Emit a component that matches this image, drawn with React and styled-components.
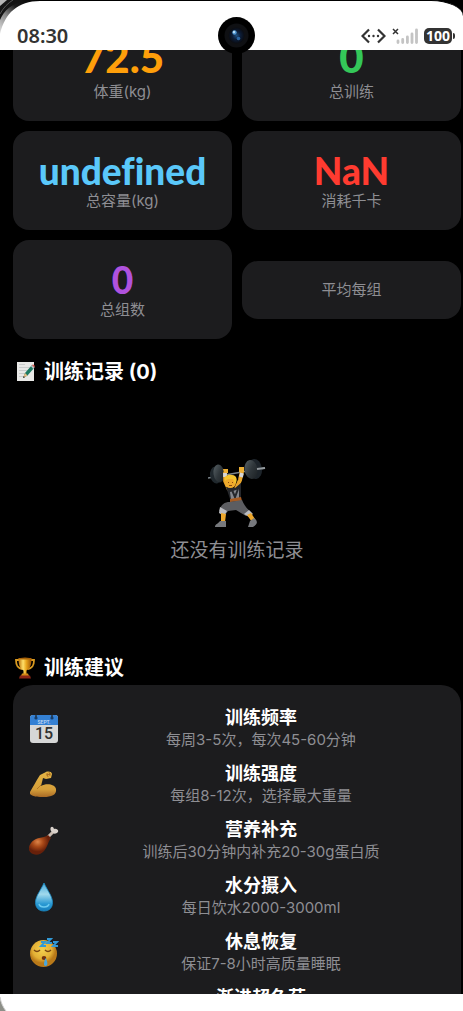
import React from 'react'
import styled, { createGlobalStyle } from 'styled-components'

const stats = [
  { value: '72.5', label: '体重(kg)', color: '#ff9f0a', large: true },
  { value: '0', label: '总训练', color: '#34c759', large: true },
  { value: 'undefined', label: '总容量(kg)', color: '#5ac8fa' },
  { value: 'NaN', label: '消耗千卡', color: '#ff3b30' },
  { value: '0', label: '总组数', color: '#af52de' },
  { label: '平均每组' },
]

const tips = [
  { icon: CalendarIcon, title: '训练频率', text: '每周3-5次，每次45-60分钟' },
  { icon: MuscleIcon, title: '训练强度', text: '每组8-12次，选择最大重量' },
  { icon: DrumstickIcon, title: '营养补充', text: '训练后30分钟内补充20-30g蛋白质' },
  { icon: DropIcon, title: '水分摄入', text: '每日饮水2000-3000ml' },
  { icon: SleepIcon, title: '休息恢复', text: '保证7-8小时高质量睡眠' },
  { icon: ChartIcon, title: '渐进超负荷', text: '' },
]

function App() {
  return (
    <>
      <GlobalStyle />
      <Phone>
        <StatusBar>
          <CornerShade />
          <Time>08:30</Time>
          <StatusIcons>
            <LinkIcon />
            <SignalIcon />
            <Battery>100</Battery>
          </StatusIcons>
          <Camera>
            <CameraLens />
          </Camera>
        </StatusBar>
        <Screen>
          <Content>
            <StatGrid>
              {stats.map((stat) => (
                <StatCard key={stat.label}>
                  {stat.value && (
                    <StatValue $color={stat.color} $large={stat.large}>
                      {stat.value}
                    </StatValue>
                  )}
                  <StatLabel>{stat.label}</StatLabel>
                </StatCard>
              ))}
            </StatGrid>
            <SectionTitle>
              <MemoIcon />
              训练记录 (0)
            </SectionTitle>
            <EmptyState>
              <LifterIcon />
              <EmptyText>还没有训练记录</EmptyText>
            </EmptyState>
            <SectionTitle>
              <TrophyIcon />
              训练建议
            </SectionTitle>
            <TipList>
              {tips.map(({ icon: Icon, title, text }) => (
                <TipRow key={title}>
                  <Icon />
                  <TipBody>
                    <TipTitle>{title}</TipTitle>
                    <TipText>{text}</TipText>
                  </TipBody>
                </TipRow>
              ))}
            </TipList>
          </Content>
        </Screen>
        <BottomBar>
          <BottomCorner />
        </BottomBar>
      </Phone>
    </>
  )
}

export default App

function CornerShade() {
  return (
    <CornerSvg width="40" height="40" viewBox="0 0 40 40" aria-hidden="true">
      <defs>
        <linearGradient id="rim" x1="0" y1="1" x2="1" y2="0">
          <stop offset="0" stopColor="#e4e4e4" />
          <stop offset=".35" stopColor="#8a8a8a" />
          <stop offset=".6" stopColor="#1c1c1c" />
          <stop offset="1" stopColor="#000" />
        </linearGradient>
      </defs>
      <path d="M0 0H40V1C18 1 5 13 0 34Z" fill="url(#rim)" />
      <path d="M0 20C4 10 12 4 24 0H0Z" fill="#141414" />
      <path d="M0 14C3 8 8 3 13 0" fill="none" stroke="#555" />
      <path d="M0 6L7 0H0Z" fill="#b5b5b5" />
    </CornerSvg>
  )
}

function BottomCorner() {
  return (
    <svg width="10" height="17" viewBox="0 0 10 17" aria-hidden="true">
      <path d="M0 3C1 9 3 13 6 17H0Z" fill="#8d8f88" />
      <path d="M0 3C1 9 3 13 6 17" fill="none" stroke="#cfcfcf" />
    </svg>
  )
}

function LinkIcon() {
  return (
    <svg width="25" height="16" viewBox="0 0 25 16" aria-hidden="true">
      <path d="M8 1.5L1.5 8L8 14.5M17 1.5L23.500 8L17 14.500" fill="none" stroke="#333" strokeWidth="2.200" />
      <circle cx="8" cy="8" r="1.200" fill="#333" />
      <circle cx="12.500" cy="8" r="1.200" fill="#333" />
      <circle cx="17" cy="8" r="1.200" fill="#333" />
    </svg>
  )
}

function SignalIcon() {
  return (
    <svg width="26" height="16" viewBox="0 0 26 16" aria-hidden="true">
      <path d="M1 1L6 6M6 1L1 6" stroke="#333" strokeWidth="1.500" />
      <path d="M6 13V14.500M10.700 11.500V14.500M15.400 9V14.500M20 6V14.500M24.500 2V14.500" stroke="#c4c4c4" strokeWidth="2.800" strokeLinecap="round" />
    </svg>
  )
}

function CameraLens() {
  return (
    <svg width="37" height="37" viewBox="0 0 37 37" aria-hidden="true">
      <defs>
        <radialGradient id="lens">
          <stop offset="0" stopColor="#1f4f80" />
          <stop offset=".5" stopColor="#0c1d38" />
          <stop offset="1" stopColor="#0a0c12" />
        </radialGradient>
      </defs>
      <circle cx="18.500" cy="18.500" r="18.500" fill="#000" />
      <circle cx="18.500" cy="18.500" r="12" fill="#0f1013" />
      <circle cx="18.500" cy="18.500" r="8" fill="url(#lens)" />
      <circle cx="16.500" cy="15.500" r="2.200" fill="#4f94cf" />
      <circle cx="16" cy="15" r="1.200" fill="#b5dcf7" />
      <circle cx="20.500" cy="21.500" r="1.800" fill="#2b66a3" />
    </svg>
  )
}

function MemoIcon() {
  return (
    <svg width="22" height="22" viewBox="0 0 22 22" aria-hidden="true">
      <path d="M4 1H21V20H4Z" fill="#e9e9e7" />
      <path d="M6 3.500H12M6 6.500H17M6 9.500H15M6 12.500H12M6 15.500H11" stroke="#c3c5c6" strokeWidth=".8" />
      <path d="M10 17L12 12L19 4L21.500 6.500L14.500 14.500Z" fill="#1d7a62" />
      <path d="M10 17L12 12L14.500 14.500Z" fill="#e8bc82" />
      <path d="M10 17L10.800 15L12 16.200Z" fill="#222" />
      <path d="M17.800 5.300L19 4L21.500 6.500L20.300 7.900Z" fill="#b8bcc0" />
      <path d="M19 4C20 2.500 22.500 4.500 21.500 6.500Z" fill="#e1574f" />
    </svg>
  )
}

function TrophyIcon() {
  return (
    <svg width="22" height="22" viewBox="0 0 22 22" aria-hidden="true">
      <defs>
        <linearGradient id="gold">
          <stop offset="0" stopColor="#b86e08" />
          <stop offset=".35" stopColor="#ffe06a" />
          <stop offset=".6" stopColor="#e9a51c" />
          <stop offset="1" stopColor="#9a5204" />
        </linearGradient>
      </defs>
      <path d="M6 3H3C3 8 4 11 9 12M18 3H21C21 8 20 11 15 12" fill="none" stroke="#d99a20" strokeWidth="1.800" />
      <path d="M5.500 1H18.500C18.500 8 17 12 13.500 13.500V17H10.500V13.500C7 12 5.500 8 5.500 1Z" fill="url(#gold)" />
      <ellipse cx="12" cy="1.600" rx="6.500" ry="1" fill="#a76208" />
      <path d="M9 16.500H15L16 19H8Z" fill="#d58b17" />
      <path d="M7 18.500H17L18 21.500H6Z" fill="#8d2716" />
    </svg>
  )
}

function LifterIcon() {
  return (
    <svg width="58" height="70" viewBox="0 0 58 70" aria-hidden="true">
      <defs>
        <linearGradient id="plate" x1="0" y1="0" x2="1" y2="1">
          <stop offset="0" stopColor="#5a6468" />
          <stop offset=".5" stopColor="#30373b" />
          <stop offset="1" stopColor="#1a1f22" />
        </linearGradient>
      </defs>
      <path d="M0 19L57 9" stroke="#7c858b" strokeWidth="1.500" />
      <ellipse cx="8" cy="16" rx="6" ry="8.500" fill="#20282d" transform="rotate(-8 8 16)" />
      <ellipse cx="11" cy="14.500" rx="5.500" ry="9" fill="url(#plate)" transform="rotate(-8 11 14.500)" />
      <ellipse cx="47" cy="10" rx="7" ry="10" fill="#1d242a" transform="rotate(-8 47 10)" />
      <ellipse cx="43" cy="10.500" rx="6.500" ry="9.500" fill="url(#plate)" transform="rotate(-8 43 10.500)" />
      <path d="M49 10L57 9" stroke="#93999d" strokeWidth="2" />
      <path d="M17 13L17 22L21 31" fill="none" stroke="#e9a52a" strokeWidth="3.600" />
      <path d="M34 12L32 21L28 30" fill="none" stroke="#e9a52a" strokeWidth="4" />
      <path d="M17 14L17 18M34 14L33 18" stroke="#d5d5d8" strokeWidth="3.800" />
      <path d="M15 10H20V14H16ZM31 8H36V13H31Z" fill="#edaf35" />
      <path d="M18 28L27 29L33 24L33 41L23 43Z" fill="#25272b" />
      <path d="M22 33L31 30V39L23 41Z" fill="#85888e" />
      <path d="M24 31L27 38L30 30" fill="none" stroke="#25272b" strokeWidth="2" />
      <circle cx="22.500" cy="23.500" r="5.500" fill="#efaa2c" />
      <path d="M17 22C15 17 20 15 24 16C29 16 30 22 27 25L25 20L20 20Z" fill="#f4c42e" />
      <path d="M20 23.500H21M24 23.500H25M21 26.500H24" stroke="#8c4c13" />
      <path d="M22 40L33 38L34 42L22 43Z" fill="#a65b22" />
      <path d="M22 43L34 41C36 46 39 50 44 54L38 57L28 51L20 52L17 56L11 52C13 46 16 43 22 43Z" fill="#5c5d61" />
      <path d="M12 48L19 52L16 57L11 54ZM41 51L45 55L41 58L36 55Z" fill="#bbbcc0" />
      <path d="M13 54L18 55L17 63H13ZM39 56L43 54L47 60L44 63Z" fill="#eda72b" />
      <path d="M12 62H18V68H7C7 65 10 65 12 62ZM42 62L46 59C50 62 50 65 45 68H40Z" fill="#77797d" />
    </svg>
  )
}

function CalendarIcon() {
  return (
    <TipIcon viewBox="0 0 30 30" aria-hidden="true">
      <rect x="1" y="1" width="28" height="28" rx="3" fill="#d6d7d7" />
      <path d="M1 11V4Q1 1 4 1H26Q29 1 29 4V11Z" fill="#3480d3" />
      <circle cx="7" cy="4" r="1.600" fill="#173b67" />
      <circle cx="23" cy="4" r="1.600" fill="#173b67" />
      <path d="M7 0V3M23 0V3" stroke="#222" strokeWidth="1.200" />
      <CalendarText x="15" y="10" $size={5} fill="#c4ddf5">SEPT.</CalendarText>
      <CalendarText x="15" y="25" $size={16} fill="#303030">15</CalendarText>
    </TipIcon>
  )
}

function MuscleIcon() {
  return (
    <TipIcon viewBox="0 0 30 30" aria-hidden="true">
      <defs>
        <linearGradient id="arm" x1="0" y1="0" x2="0" y2="1">
          <stop offset="0" stopColor="#e5b544" />
          <stop offset=".7" stopColor="#d69f3a" />
          <stop offset="1" stopColor="#a96a25" />
        </linearGradient>
      </defs>
      <path d="M1 22C4 17 7 11 11 5L17 2C18 1 23 1 23 4L22 8L17 9L14 8L12 16C17 13 26 14 27 19C28 25 22 27 15 27C10 27 4 27 1 24Z" fill="url(#arm)" />
      <path d="M12 15C10 17 9 18 8 19M18 3L19 7M20 2L21 6M17 5L22 4" fill="none" stroke="#a76a21" strokeWidth=".9" />
    </TipIcon>
  )
}

function DrumstickIcon() {
  return (
    <TipIcon viewBox="0 0 30 30" aria-hidden="true">
      <defs>
        <radialGradient id="meat" cx=".4" cy=".35">
          <stop offset="0" stopColor="#dc8448" />
          <stop offset=".5" stopColor="#a84817" />
          <stop offset="1" stopColor="#67200a" />
        </radialGradient>
      </defs>
      <path d="M18 12L24 6" stroke="#c9bbb1" strokeWidth="3" />
      <path d="M22 5C20 1 24 -1 25 3C28 2 31 5 28 7C26 8 25 8 24 7Z" fill="#d9d1cb" />
      <path d="M19 9L22 12C19 16 19 20 15 25C11 30 2 30 0 24C-1 19 4 13 10 12C14 11 16 11 19 9Z" fill="url(#meat)" />
    </TipIcon>
  )
}

function DropIcon() {
  return (
    <TipIcon viewBox="0 0 30 30" aria-hidden="true">
      <defs>
        <linearGradient id="water" x1="0" y1="0" x2="0" y2="1">
          <stop offset="0" stopColor="#45a8d9" />
          <stop offset=".4" stopColor="#a1d9ec" />
          <stop offset=".75" stopColor="#2999d3" />
          <stop offset="1" stopColor="#167dbb" />
        </linearGradient>
      </defs>
      <path d="M15 1C18 8 23.500 14 23.500 20.500C23.500 26 20 29 15 29C10 29 6.500 26 6.500 20.500C6.500 14 12 8 15 1Z" fill="url(#water)" stroke="#198bc6" strokeWidth=".8" />
      <path d="M10 22C11 26 19 26 20 22" fill="none" stroke="#6bcaf0" strokeWidth="1.500" />
    </TipIcon>
  )
}

function SleepIcon() {
  return (
    <TipIcon viewBox="0 0 30 30" aria-hidden="true">
      <defs>
        <radialGradient id="face" cx=".45" cy=".35">
          <stop offset="0" stopColor="#f3d050" />
          <stop offset=".7" stopColor="#e3b035" />
          <stop offset="1" stopColor="#b97919" />
        </radialGradient>
      </defs>
      <circle cx="14.500" cy="15.500" r="13.500" fill="url(#face)" />
      <path d="M5 12Q8 15 11 12M16 12Q19 15 22 12" fill="none" stroke="#774411" strokeWidth="1.400" />
      <ellipse cx="15" cy="20" rx="2.300" ry="2" fill="#71300f" />
      <path d="M16.500 20C19 24 19 28 16.500 28C14 28 15 24 16.500 20Z" fill="#48a6de" />
      <path d="M12 4H16L12 8H17M18 1H22L18 5H23M24 4H28L24 8H29" fill="none" stroke="#3199d6" strokeWidth="1.800" />
    </TipIcon>
  )
}

function ChartIcon() {
  return (
    <TipIcon viewBox="0 0 30 30" aria-hidden="true">
      <rect x="1" y="0" width="27" height="29" rx="1" fill="#d5d2dc" />
      <path d="M3 24L10 17L15 20L25 6" fill="none" stroke="#d64545" strokeWidth="2" />
    </TipIcon>
  )
}

const GlobalStyle = createGlobalStyle`
* {
  box-sizing: border-box;
}
body {
  margin: 0;
  background: #000;
  font-family: Inter, "Noto Sans CJK SC", sans-serif;
}
`

const Phone = styled.div`
display: flex;
flex-direction: column;
height: 100vh;
overflow: hidden;
background: #000;
`

const StatusBar = styled.header`
position: relative;
display: flex;
justify-content: space-between;
align-items: flex-end;
flex: none;
height: 50px;
padding: 0 8px 4px 17px;
background: #fff;
border-top: 1px solid #000;
border-top-right-radius: 32px 16px;
`

const CornerSvg = styled.svg`
position: absolute;
top: -1px;
left: 0;
`

const Time = styled.time`
font-family: "Noto Sans", sans-serif;
font-size: 20px;
line-height: 20px;
font-weight: 600;
color: #333;
`

const StatusIcons = styled.div`
display: flex;
align-items: center;
gap: 6px;
height: 20px;
`

const Battery = styled.span`
position: relative;
width: 28px;
height: 16px;
margin-right: 3px;
border-radius: 5px;
background: #333;
color: #fff;
font-family: "Noto Sans", sans-serif;
font-size: 14px;
line-height: 16px;
font-weight: 700;
text-align: center;

&::after {
  content: "";
  position: absolute;
  top: 5px;
  right: -3px;
  width: 2px;
  height: 6px;
  border-radius: 0 2px 2px 0;
  background: #333;
}
`

const Camera = styled.div`
position: absolute;
z-index: 2;
top: 16px;
left: 0;
right: 0;
display: flex;
justify-content: center;
padding-left: 10px;
height: 37px;
`

const Screen = styled.main`
flex: 1;
min-height: 0;
overflow: hidden;
`

/* the page is scrolled a little, so the first row of cards is cut */
const Content = styled.div`
margin-top: -37px;
padding: 0 2px 0 13px;
`

const StatGrid = styled.section`
display: grid;
grid-template-columns: 1fr 1fr;
align-items: center;
gap: 10px;
`

const StatCard = styled.div`
padding: 19px 0;
border-radius: 16px;
background: #1c1c1e;
text-align: center;
`

const StatValue = styled.div`
font-family: Lato, sans-serif;
font-size: ${(props) => (props.$large ? '42px' : '37px')};
line-height: ${(props) => (props.$large ? '50px' : '41px')};
font-weight: 900;
font-variant-ligatures: none;
color: ${(props) => props.$color};
`

const StatLabel = styled.div`
font-size: 15px;
line-height: 20px;
color: #8e8e93;
`

const SectionTitle = styled.h2`
display: flex;
align-items: center;
gap: 9px;
margin: 21px 0 5px;
font-size: 20px;
line-height: 24px;
font-weight: 700;
color: #fff;
`

const EmptyState = styled.section`
display: flex;
flex-direction: column;
align-items: center;
gap: 8px;
padding: 70px 0;
`

const EmptyText = styled.p`
margin: 0;
font-size: 19px;
line-height: 28px;
color: #8e8e93;
`

const TipList = styled.ul`
display: flex;
flex-direction: column;
gap: 12px;
margin: 0;
padding: 22px 16px;
border-radius: 20px;
background: #1c1c1e;
list-style: none;
`

const TipRow = styled.li`
display: flex;
align-items: center;
gap: 18px;
`

const TipIcon = styled.svg`
flex: none;
width: 30px;
height: 30px;
`

const CalendarText = styled.text`
font-family: Roboto, sans-serif;
font-size: ${(props) => props.$size}px;
font-weight: 500;
text-anchor: middle;
`

const TipBody = styled.div`
flex: 1;
text-align: center;
`

const TipTitle = styled.h3`
margin: 0;
font-size: 18px;
line-height: 22px;
font-weight: 700;
color: #fff;
`

const TipText = styled.p`
margin: 0;
min-height: 22px;
font-size: 15px;
line-height: 22px;
color: #8e8e93;
`

const BottomBar = styled.footer`
flex: none;
height: 17px;
background: #fff;
`
